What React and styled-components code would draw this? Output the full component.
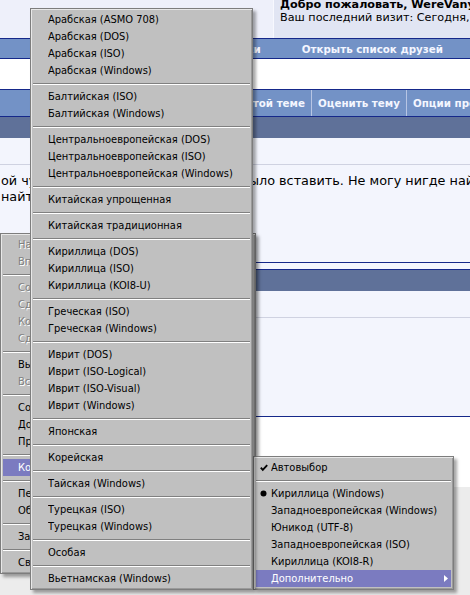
import React from 'react';
import styled, { createGlobalStyle } from 'styled-components';

const GlobalStyle = createGlobalStyle`
  html, body {
    margin: 0;
    padding: 0;
  }
  body {
    width: 470px;
    height: 595px;
    overflow: hidden;
    background: #f3f5fd;
    font-family: "DejaVu Sans", Verdana, sans-serif;
  }
`;

const moreItems = [
	['Арабская (ASMO 708)', 'Арабская (DOS)', 'Арабская (ISO)', 'Арабская (Windows)'],
	['Балтийская (ISO)', 'Балтийская (Windows)'],
	['Центральноевропейская (DOS)', 'Центральноевропейская (ISO)', 'Центральноевропейская (Windows)'],
	['Китайская упрощенная'],
	['Китайская традиционная'],
	['Кириллица (DOS)', 'Кириллица (ISO)', 'Кириллица (KOI8-U)'],
	['Греческая (ISO)', 'Греческая (Windows)'],
	['Иврит (DOS)', 'Иврит (ISO-Logical)', 'Иврит (ISO-Visual)', 'Иврит (Windows)'],
	['Японская'],
	['Корейская'],
	['Тайская (Windows)'],
	['Турецкая (ISO)', 'Турецкая (Windows)'],
	['Особая'],
	['Вьетнамская (Windows)']
];

const contextItems = [
	[
		{ label: 'Назад', disabled: true },
		{ label: 'Вперед', disabled: true }
	],
	[
		{ label: 'Сохранить фон как...', disabled: true },
		{ label: 'Сделать фоновым рисунком', disabled: true },
		{ label: 'Копировать фон', disabled: true },
		{ label: 'Сделать элементом рабочего стола...', disabled: true }
	],
	[{ label: 'Выделить все' }, { label: 'Вставить', disabled: true }],
	[{ label: 'Создать ярлык' }, { label: 'Добавить в избранное...' }, { label: 'Просмотр HTML-кода' }],
	[{ label: 'Кодировка', active: true, sub: true }],
	[{ label: 'Печать' }, { label: 'Обновить' }],
	[{ label: 'Загрузить все ссылки' }],
	[{ label: 'Свойства' }]
];

const encodingItems = [
	[{ label: 'Автовыбор', mark: 'check' }],
	[
		{ label: 'Кириллица (Windows)', mark: 'dot' },
		{ label: 'Западноевропейская (Windows)' },
		{ label: 'Юникод (UTF-8)' },
		{ label: 'Западноевропейская (ISO)' },
		{ label: 'Кириллица (KOI8-R)' },
		{ label: 'Дополнительно', active: true, sub: true }
	]
];

const CheckIcon = () => (
	<svg width="8" height="8" viewBox="0 0 8 8">
		<polyline points="0.8,3.6 2.8,5.8 7.2,1.2" fill="none" stroke="#000" strokeWidth="1.9" />
	</svg>
);

const DotIcon = () => (
	<svg width="7" height="7" viewBox="0 0 7 7">
		<circle cx="3.5" cy="3.5" r="3" fill="#000" />
	</svg>
);

const ArrowIcon = ({ color }) => (
	<svg width="4" height="7" viewBox="0 0 4 7">
		<polygon points="0,0 4,3.5 0,7" fill={color} />
	</svg>
);

const Menu = ({ groups, left, top, width, z }) => (
	<MenuBox $left={left} $top={top} $width={width} $z={z}>
		{groups.map((group, gi) => (
			<React.Fragment key={gi}>
				{gi > 0 && <Separator />}
				{group.map(item => {
					const it = typeof item === 'string' ? { label: item } : item;
					return (
						<Item key={it.label} $active={it.active} $disabled={it.disabled}>
							<Mark>
								{it.mark === 'check' && <CheckIcon />}
								{it.mark === 'dot' && <DotIcon />}
							</Mark>
							<Label>{it.label}</Label>
							<SubArrow>{it.sub && <ArrowIcon color={it.active ? '#fff' : '#000'} />}</SubArrow>
						</Item>
					);
				})}
			</React.Fragment>
		))}
	</MenuBox>
);

const App = () => (
	<>
		<GlobalStyle />
		<Page>
			<TopStrip>
				<div />
				<Welcome>
					<b>Добро пожаловать, WereVanya</b>
					<span>Ваш последний визит: Сегодня, 12:40</span>
				</Welcome>
			</TopStrip>
			<NavBar>
				<NavLink>Мой кабинет</NavLink>
				<NavLink>Мои настройки</NavLink>
				<NavLink>Открыть список друзей</NavLink>
			</NavBar>
			<WhiteGap />
			<TopicBar>
				<TopicCell $align="flex-end" $first>
					Подписка на тему&nbsp;&nbsp;&nbsp;Поиск в этой теме
				</TopicCell>
				<TopicCell>Оценить тему</TopicCell>
				<TopicCell $align="flex-start">Опции просмотра</TopicCell>
			</TopicBar>
			<DarkBar />
			<LightGap />
			<Post>
				<PostLine>ой чудесный код который и нужно было вставить. Не могу нигде найти его</PostLine>
				<PostLine>найти в интернете.</PostLine>
			</Post>
			<Table>
				<DarkBar />
				<TableRow />
				<TableBody />
			</Table>
			<WhiteArea />
			<GreyArea />

			<Menu groups={contextItems} left={0} top={233} width={256} z={1} />
			<Menu groups={encodingItems} left={253} top={456} width={201} z={2} />
			<Menu groups={moreItems} left={30} top={8} width={223} z={3} />
		</Page>
	</>
);

export default App;

const Page = styled.div`
	position: relative;
	width: 470px;
	height: 595px;
	overflow: hidden;
	display: flex;
	flex-direction: column;
	background: #f3f5fd;
`;

const TopStrip = styled.div`
	display: grid;
	grid-template-columns: 273px 1fr;
	height: 38px;
	flex: none;
	background: #eef0fa;
`;

const Welcome = styled.div`
	display: flex;
	flex-direction: column;
	padding-left: 6px;
	background: #e1e5f3;
	border-left: 1px solid #f7f8fe;
	font-size: 11.2px;
	line-height: 13px;
	color: #000;
	white-space: nowrap;
	overflow: hidden;

	b {
		margin-top: -2px;
	}
`;

const NavBar = styled.div`
	flex: none;
	height: 19px;
	display: flex;
	justify-content: flex-end;
	align-items: center;
	gap: 41px;
	padding-right: 27px;
	background: #7392c6;
	border-top: 1px solid #15288a;
	border-bottom: 1px solid #15288a;
	overflow: hidden;
`;

const NavLink = styled.span`
	flex: none;
	color: #f4f6ff;
	font-weight: bold;
	font-size: 10.3px;
	white-space: nowrap;
`;

const WhiteGap = styled.div`
	flex: none;
	height: 30px;
	background: #fff;
`;

const TopicBar = styled.div`
	flex: none;
	display: grid;
	grid-template-columns: 311px 95px 1fr;
	height: 26px;
	background: #7392c6;
	border-top: 1px solid #15288a;
	border-bottom: 1px solid #15288a;
`;

const TopicCell = styled.div`
	display: flex;
	align-items: center;
	justify-content: ${p => p.$align || 'center'};
	padding: 0 6px;
	border-left: ${p => (p.$first ? 'none' : '1px solid #b7c5e4')};
	color: #f4f6ff;
	font-weight: bold;
	font-size: 10.3px;
	white-space: nowrap;
	overflow: hidden;
`;

const DarkBar = styled.div`
	flex: none;
	height: 21px;
	background: #5f7199;
`;

const LightGap = styled.div`
	flex: none;
	height: 26px;
	border-bottom: 1px solid #cfd2e1;
`;

const Post = styled.div`
	flex: none;
	height: 89px;
	padding-top: 8px;
	font-size: 12.8px;
	line-height: 16px;
	color: #000;
`;

const PostLine = styled.div`
	white-space: nowrap;
	padding-left: 1px;
`;

const Table = styled.div`
	flex: none;
	border-top: 1px solid #15288a;
	padding-top: 6px;
	display: flex;
	flex-direction: column;

	${DarkBar} {
		border-top: 1px solid #15288a;
	}
`;

const TableRow = styled.div`
	height: 26px;
	border-bottom: 1px solid #cfd2e1;
`;

const TableBody = styled.div`
	height: 98px;
	border-bottom: 1px solid #15288a;
`;

const WhiteArea = styled.div`
	flex: none;
	height: 70px;
	background: #fff;
`;

const GreyArea = styled.div`
	flex: 1;
	background: #ececec;
`;

const MenuBox = styled.div`
	position: absolute;
	left: ${p => p.$left}px;
	top: ${p => p.$top}px;
	width: ${p => p.$width}px;
	z-index: ${p => p.$z};
	box-sizing: border-box;
	padding: 2px;
	background: #c0c0c0;
	border: 1px solid #7d7d7d;
	box-shadow: inset 1px 1px 0 #e8e8e8, inset -1px -1px 0 #9a9a9a, 3px 3px 3px rgba(0, 0, 0, 0.35);
	font-family: "DejaVu Sans Condensed", "Liberation Sans", sans-serif;
	font-size: 11px;
	color: #000;
`;

const Item = styled.div`
	height: 17px;
	display: flex;
	align-items: center;
	white-space: nowrap;
	overflow: hidden;
	background: ${p => (p.$active ? '#7b7bc0' : 'transparent')};
	color: ${p => (p.$active ? '#fff' : p.$disabled ? '#808080' : '#000')};
	text-shadow: ${p => (p.$disabled ? '1px 1px 0 #fff' : 'none')};
`;

const Mark = styled.span`
	flex: none;
	width: 15px;
	display: flex;
	justify-content: center;
	align-items: center;
`;

const Label = styled.span`
	flex: 1;
	overflow: hidden;
	line-height: 17px;
`;

const SubArrow = styled.span`
	flex: none;
	width: 10px;
	display: flex;
	justify-content: flex-end;
	padding-right: 3px;
`;

const Separator = styled.div`
	margin: 4px 0 3px;
	border-top: 1px solid #808080;
	border-bottom: 1px solid #fff;
`;
